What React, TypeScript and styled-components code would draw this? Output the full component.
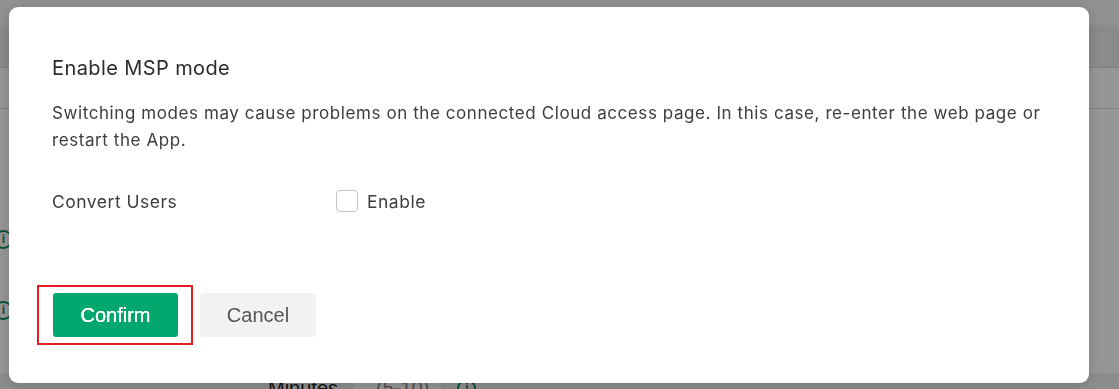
import React from "react"
import styled, { createGlobalStyle } from "styled-components"

const GlobalStyle = createGlobalStyle`
  html, body {
    margin: 0;
    padding: 0;
    width: 1119px;
    height: 389px;
    overflow: hidden;
    background: #ffffff;
  }
  * {
    box-sizing: border-box;
  }
`

// page behind the dialog (only slivers of it are visible)
const Page = styled.div`
  width: 1119px;
  height: 389px;
  display: flex;
  flex-direction: column;
  font-family: "Liberation Sans", Arial, sans-serif;
  color: #333;
`

const TopBar = styled.div`
  height: 25px;
  background: #f7f7f7;
`

const SubBar = styled.div`
  height: 43px;
  background: #ececec;
  border-bottom: 1px solid #dcdcdc;
`

const TabStrip = styled.div`
  height: 41px;
  border-bottom: 1px solid #d6d6d6;
`

const FormArea = styled.div`
  flex: 1;
  display: flex;
  flex-direction: column;
  padding-top: 119px;
  gap: 49px;
  margin-left: -6px;
`

const FormLine = styled.div`
  display: flex;
  align-items: center;
  height: 22px;
`

const InfoDot = styled.span`
  width: 19px;
  height: 19px;
  border-radius: 50%;
  border: 2px solid #0b8a5a;
  color: #0b8a5a;
  font: bold 12px "Liberation Sans", Arial, sans-serif;
  display: flex;
  align-items: center;
  justify-content: center;
`

const MinutesRow = styled.div`
  display: flex;
  align-items: center;
  height: 30px;
  margin-top: auto;
  margin-bottom: -14px;
  background: #f0f0f0;
  padding-left: 268px;
  gap: 16px;
  font-size: 20px;
`

const MinutesLabel = styled.span`
  color: #222;
`

const MinutesHint = styled.span`
  color: #888;
  background: #fff;
  padding: 0 12px 0 22px;
  height: 30px;
  display: flex;
  align-items: center;
`

const Overlay = styled.div`
  position: fixed;
  inset: 0;
  background: rgba(0, 0, 0, 0.41);
`

const Dialog = styled.div`
  position: fixed;
  left: 9px;
  top: 7px;
  width: 1080px;
  height: 376px;
  background: #ffffff;
  border-radius: 9px;
  box-shadow: 0 2px 14px rgba(0, 0, 0, 0.18);
  padding: 48px 43px 0 43px;
  display: flex;
  flex-direction: column;
  font-family: Inter, "Noto Sans", sans-serif;
  color: #333333;
`

const Title = styled.h2`
  margin: 0;
  font-size: 20px;
  font-weight: 400;
  line-height: 26px;
  color: #2b2b2b;
  letter-spacing: 0.4px;
`

const Message = styled.p`
  margin: 19px 0 0 0;
  font-size: 17px;
  line-height: 27px;
  color: #3d3d3d;
  letter-spacing: 0.58px;
  max-width: 1000px;
`

const FieldRow = styled.div`
  display: flex;
  align-items: center;
  margin-top: 33px;
  height: 28px;
`

const FieldLabel = styled.span`
  width: 284px;
  font-size: 17.5px;
  letter-spacing: 0.5px;
  color: #3d3d3d;
`

const CheckLabel = styled.label`
  display: flex;
  align-items: center;
  gap: 9px;
  font-size: 17.5px;
  letter-spacing: 0.5px;
  color: #3d3d3d;
  cursor: pointer;
`

const CheckBox = styled.span`
  width: 22px;
  height: 22px;
  border: 1px solid #c4c4c4;
  border-radius: 4px;
  background: #fff;
`

const Footer = styled.div`
  display: flex;
  align-items: center;
  gap: 7px;
  margin-top: 70px;
  margin-left: -15px;
`

const Highlight = styled.div`
  border: 2px solid #e51c23;
  padding: 6px 13px 6px 14px;
`

const Button = styled.button<{ primary?: boolean }>`
  height: 44px;
  width: ${({ primary }) => (primary ? "125px" : "116px")};
  border: none;
  border-radius: 3px;
  background: ${({ primary }) => (primary ? "#01a76d" : "#f2f2f2")};
  color: ${({ primary }) => (primary ? "#ffffff" : "#555555")};
  font-family: "Liberation Sans", Arial, sans-serif;
  font-size: 20px;
  font-weight: 400;
  cursor: pointer;
  padding: 0;
  ${({ primary }) =>
    primary ? "text-shadow: 0 0 0.4px #fff, 0 0 0.4px #fff;" : ""}
`

export default function App() {
  return (
    <>
      <GlobalStyle />
      <Page>
        <TopBar />
        <SubBar />
        <TabStrip />
        <FormArea>
          <FormLine>
            <InfoDot>i</InfoDot>
          </FormLine>
          <FormLine>
            <InfoDot>i</InfoDot>
          </FormLine>
        </FormArea>
        <MinutesRow>
          <MinutesLabel>Minutes</MinutesLabel>
          <MinutesHint>(5-10)</MinutesHint>
          <InfoDot>i</InfoDot>
        </MinutesRow>
      </Page>
      <Overlay />
      <Dialog>
        <Title>Enable MSP mode</Title>
        <Message>
          Switching modes may cause problems on the connected Cloud access
          page. In this case, re-enter the web page or restart the App.
        </Message>
        <FieldRow>
          <FieldLabel>Convert Users</FieldLabel>
          <CheckLabel>
            <CheckBox />
            Enable
          </CheckLabel>
        </FieldRow>
        <Footer>
          <Highlight>
            <Button primary>Confirm</Button>
          </Highlight>
          <Button>Cancel</Button>
        </Footer>
      </Dialog>
    </>
  )
}
